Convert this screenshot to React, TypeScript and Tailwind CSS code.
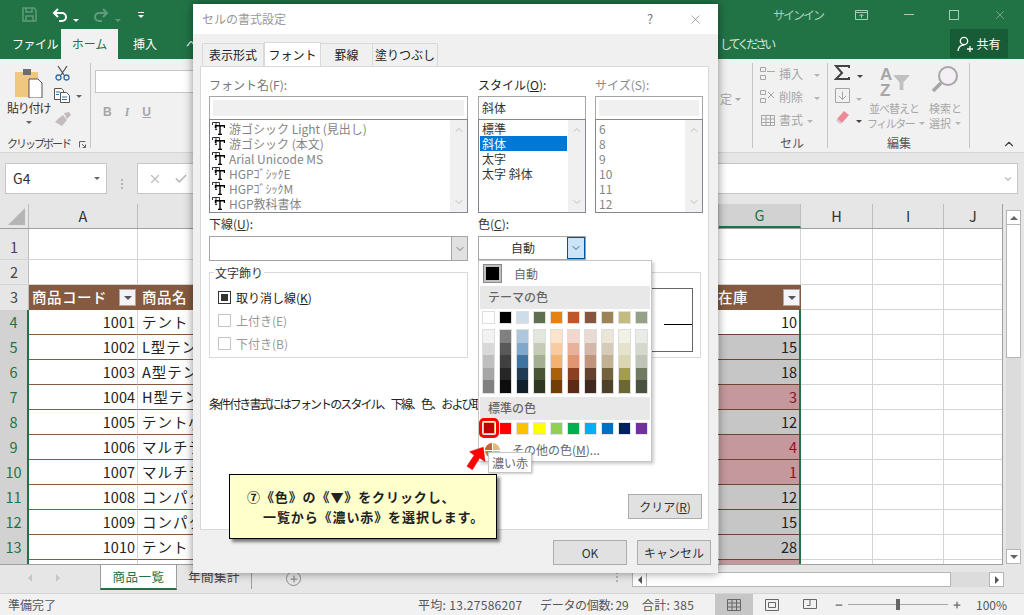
import React from "react";
import { X, Check, ChevronDown, ChevronUp, Plus, Minus } from "lucide-react";

const themeTop = ["bg-[#ffffff]", "bg-[#000000]", "bg-[#cddde9]", "bg-[#5f7050]", "bg-[#e48312]", "bg-[#bd582c]", "bg-[#865640]", "bg-[#9b8357]", "bg-[#c2bc80]", "bg-[#94a088]"];
const themeShades = [
  ["bg-[#f2f2f2]", "bg-[#d9d9d9]", "bg-[#bfbfbf]", "bg-[#a6a6a6]", "bg-[#808080]"],
  ["bg-[#808080]", "bg-[#595959]", "bg-[#404040]", "bg-[#262626]", "bg-[#0d0d0d]"],
  ["bg-[#adc8de]", "bg-[#80a8cb]", "bg-[#3e749f]", "bg-[#1f3c54]", "bg-[#111f2c]"],
  ["bg-[#e3e6dd]", "bg-[#c4ccb8]", "bg-[#a3af90]", "bg-[#4a5536]", "bg-[#2f3723]"],
  ["bg-[#fbe4cb]", "bg-[#f8cca0]", "bg-[#f3b26f]", "bg-[#aa6009]", "bg-[#713f06]"],
  ["bg-[#f4d7cc]", "bg-[#e9b09a]", "bg-[#e0966f]", "bg-[#8c401f]", "bg-[#5d2b15]"],
  ["bg-[#e9dad3]", "bg-[#d4b7a7]", "bg-[#c1957d]", "bg-[#64402f]", "bg-[#42291f]"],
  ["bg-[#ebe5d9]", "bg-[#d6cbb8]", "bg-[#c3b193]", "bg-[#74623f]", "bg-[#4d412a]"],
  ["bg-[#f2f1e5]", "bg-[#e6e3cc]", "bg-[#dad6b2]", "bg-[#a39d50]", "bg-[#6c6835]"],
  ["bg-[#e9ebe6]", "bg-[#d4d8ce]", "bg-[#bec5b7]", "bg-[#707a63]", "bg-[#4a5141]"],
];
const standard = ["bg-[#c00000]", "bg-[#ff0000]", "bg-[#ffc000]", "bg-[#ffff00]", "bg-[#92d050]", "bg-[#00b050]", "bg-[#00b0f0]", "bg-[#0070c0]", "bg-[#002060]", "bg-[#7030a0]"];

const rows = [
  { n: 4, code: 1001, name: "テント S", stock: 10, kind: "plain" },
  { n: 5, code: 1002, name: "L型テント", stock: 15, kind: "gray" },
  { n: 6, code: 1003, name: "A型テント", stock: 18, kind: "gray" },
  { n: 7, code: 1004, name: "H型テント", stock: 3, kind: "red" },
  { n: 8, code: 1005, name: "テント小", stock: 12, kind: "gray" },
  { n: 9, code: 1006, name: "マルチテント", stock: 4, kind: "red" },
  { n: 10, code: 1007, name: "マルチテント", stock: 1, kind: "red" },
  { n: 11, code: 1008, name: "コンパクト", stock: 12, kind: "gray" },
  { n: 12, code: 1009, name: "コンパクト", stock: 15, kind: "gray" },
  { n: 13, code: 1010, name: "テント・", stock: 28, kind: "gray" },
];

const Caret = ({ className = "border-t-[#666]" }: { className?: string }) => (
  <span className={`inline-block w-0 h-0 border-x-[3px] border-x-transparent border-t-[3px] ${className}`} />
);

const FilterBtn = () => (
  <div className="w-[17px] h-[17px] bg-[#f4f4f8] border border-[#a8a8a8] flex items-center justify-center">
    <span className="w-0 h-0 border-x-[4px] border-x-transparent border-t-[4px] border-t-[#555]" />
  </div>
);

const FontRow = ({ label }: { label: string }) => (
  <div className="h-[15px] flex items-center gap-[4px] text-[#858585] whitespace-nowrap">
    <svg width="13" height="13" viewBox="0 0 13 13" fill="none" stroke="#000000">
      <path d="M.5 3V.5h7V3M4 .5v7M3 7.500h2" strokeWidth="0.800" />
      <path d="M3.500 6V3.700h9V6M8 3.700v8.500M6 12.500h4" strokeWidth="1.400" />
    </svg>
    <span>{label}</span>
  </div>
);

const ListScroll = () => (
  <div className="w-[17px] h-full bg-[#f0f0f0] flex flex-col justify-between items-center py-[4px] text-[#c0c0c0]">
    <ChevronUp size={12} strokeWidth={2} />
    <ChevronDown size={12} strokeWidth={2} />
  </div>
);

const DialogButton = ({ children, className = "" }: { children: React.ReactNode; className?: string }) => (
  <div className={`w-[74px] h-[25px] bg-[#e1e1e1] border border-[#adadad] flex items-center justify-center ${className}`}>{children}</div>
);

const TitleBar = () => (
  <div className="h-[29px] flex items-center text-[#a9cdb8] relative">
    <svg className="ml-[22px]" width="15" height="15" viewBox="0 0 15 15" fill="none" stroke="#5e9c7a" strokeWidth="1.5">
      <path d="M1 1h11l2 2v11H1z" />
      <path d="M4 1v4h6V1M4 14V9h7v5" />
    </svg>
    <svg className="ml-[15px]" width="16" height="14" viewBox="0 0 16 14" fill="none" stroke="#ffffff" strokeWidth="2">
      <path d="M6 1 2 5l4 4M2 5h8a4 4 0 0 1 0 8H7" />
    </svg>
    <span className="ml-[5px] mt-[1px]"><Caret className="border-t-white" /></span>
    <svg className="ml-[14px]" width="16" height="14" viewBox="0 0 16 14" fill="none" stroke="#5e9c7a" strokeWidth="2">
      <path d="M10 1l4 4-4 4M14 5H6a4 4 0 0 0 0 8h3" />
    </svg>
    <span className="ml-[6px] mt-[1px]"><Caret className="border-t-[#5e9c7a]" /></span>
    <span className="ml-[17px] flex flex-col items-center gap-[2px]">
      <span className="w-[6px] h-[1px] bg-white" />
      <Caret className="border-t-white" />
    </span>
    <span className="ml-[629px] text-[12px] w-[49px] tracking-[-2px] whitespace-nowrap">サインイン</span>
    <svg className="ml-[33px]" width="13" height="10" viewBox="0 0 13 10" fill="none" stroke="#a9cdb8">
      <path d="M.5.5h12v9H.5zM.5 2.500h12M6.500 8V4.500M4.500 6l2-2 2 2" />
    </svg>
    <span className="ml-[36px] w-[10px] h-[1px] bg-[#a9cdb8]" />
    <span className="ml-[35px] w-[10px] h-[10px] border border-[#a9cdb8]" />
    <X className="ml-[34px]" size={14} strokeWidth={1} />
  </div>
);

const TabBar = () => (
  <div className="h-[30px] flex items-end text-[12px] text-white">
    <span className="ml-[12px] h-[30px] leading-[30px] w-[49px] tracking-[-0.5px]">ファイル</span>
    <span className="h-[30px] w-[57px] bg-[#f1f1f1] text-[#217346] text-center leading-[30px]">ホーム</span>
    <span className="ml-[15px] h-[30px] leading-[30px] w-[53px]">挿入</span>
    <span className="h-[30px] leading-[30px] w-[12px]">ペ</span>
    <span className="ml-[522px] h-[30px] leading-[30px] w-[53px] whitespace-nowrap text-[#d5e6dc] tracking-[-3px]">してください</span>
    <div className="ml-[177px] mb-[1px] w-[58px] h-[29px] bg-[#185c37] flex items-center justify-center gap-[3px]">
      <svg width="16" height="16" viewBox="0 0 16 16" fill="none" stroke="#ffffff" strokeWidth="1.300">
        <circle cx="7" cy="5" r="3.700" />
        <path d="M1 15c.5-4 2.500-6 6-6M10 13h6M13 10v6" />
      </svg>
      <span>共有</span>
    </div>
  </div>
);

const Ribbon = () => (
  <div className="h-[94px] bg-[#f1f1f1] border-b border-[#d4d4d4] flex text-[12px] text-[#444]">
    {/* クリップボード */}
    <div className="w-[91px] h-[85px] mt-[4px] border-r border-[#c6c6c6] relative shrink-0">
      <svg className="absolute left-[14px] top-[5px]" width="30" height="30" viewBox="0 0 30 30">
        <rect x="1" y="4" width="23" height="25" fill="#f0c77f" />
        <rect x="9" y="1" width="8" height="6" fill="#6d6d6d" />
        <path d="M15 11h9l4 4v15H15z" fill="#fff" stroke="#555" />
      </svg>
      <span className="absolute left-[7px] top-[36px] text-[#333] tracking-[-1.200px] whitespace-nowrap">貼り付け</span>
      <span className="absolute left-[26px] top-[56px] leading-[0]"><Caret /></span>
      <svg className="absolute left-[55px] top-[2px]" width="15" height="16" viewBox="0 0 15 16" fill="none" stroke="#2f6ea5" strokeWidth="1.300">
        <circle cx="3.500" cy="12.500" r="2.500" />
        <circle cx="11.500" cy="12.500" r="2.500" />
        <path d="M3 1l6 9M12 1L6 10" stroke="#555" />
      </svg>
      <svg className="absolute left-[54px] top-[25px]" width="16" height="15" viewBox="0 0 16 15" fill="#fff" stroke="#555">
        <path d="M.5.5h7l2 2v9H.5z" />
        <path d="M6.500 4.500h6l3 3v7h-9z" />
        <path d="M2 4h4M2 6.500h3M8 9h5M8 11.500h5" stroke="#2f6ea5" />
      </svg>
      <span className="absolute left-[76px] top-[30px] leading-[0]"><Caret /></span>
      <svg className="absolute left-[54px] top-[49px]" width="17" height="14" viewBox="0 0 17 14" fill="#c4bcbc">
        <path d="M10 1l5-1 2 3-4 4zM9 3l4 5-5 6-7-4 4-4z" />
      </svg>
      <span className="absolute left-[7px] top-[73px] text-[11px] leading-[14px] whitespace-nowrap tracking-[-2px]">クリップボード</span>
      <svg className="absolute left-[79px] top-[78px]" width="7" height="7" viewBox="0 0 7 7" fill="none" stroke="#666">
        <path d="M.5 6.500v-6h6M3 3l3.500 3.500M6.500 3.500v3h-3" />
      </svg>
    </div>
    {/* フォント */}
    <div className="w-[661px] shrink-0 pl-[4px] pt-[11px] relative">
      <div className="w-[110px] h-[23px] bg-white border border-[#c6c6c6]" />
      <div className="mt-[10px] flex items-center gap-[13px] text-[#a6a6a6] font-bold text-[12px]">
        <span className="ml-[8px] font-['Liberation_Sans',sans-serif]">B</span>
        <span className="font-['Liberation_Serif',serif] italic">I</span>
        <span className="font-['Liberation_Sans',sans-serif] underline">U</span>
      </div>
      <span className="absolute left-[629px] top-[31px] flex items-center gap-[3px] text-[#a6a6a6]">定<Caret className="border-t-[#a6a6a6]" /></span>
    </div>
    {/* セル */}
    <div className="w-[76px] h-[85px] mt-[4px] border-x border-[#c6c6c6] shrink-0 text-[#a6a6a6] flex flex-col items-start relative">
      <div className="-mt-[1px] ml-[7px] h-[23px] flex items-center gap-[3px]">
        <svg width="16" height="15" viewBox="0 0 16 15" fill="none" stroke="#a6a6a6">
          <path d="M.5 1.500h5v4h-5zM.5 9.500h5v4h-5zM7 5.500h8" />
        </svg>
        <span>挿入</span>
        <span className="ml-[8px] mt-[1px] leading-[0]"><Caret className="border-t-[#b5b5b5]" /></span>
      </div>
      <div className="ml-[7px] h-[23px] flex items-center gap-[3px]">
        <svg width="16" height="15" viewBox="0 0 16 15" fill="none" stroke="#a6a6a6">
          <path d="M.5 1.500h5v4h-5zM.5 9.500h5v4h-5zM8 3l6 6M14 3L8 9" />
        </svg>
        <span>削除</span>
        <span className="ml-[8px] mt-[1px] leading-[0]"><Caret className="border-t-[#b5b5b5]" /></span>
      </div>
      <div className="ml-[7px] h-[23px] flex items-center gap-[3px]">
        <svg width="16" height="15" viewBox="0 0 16 15" fill="none" stroke="#a6a6a6">
          <path d="M1.500 3.500h13v10h-13zM1.500 7h13M1.500 10.500h13M6 3.500v10M10.500 3.500v10" />
        </svg>
        <span>書式</span>
        <span className="ml-[1px] mt-[1px] leading-[0]"><Caret className="border-t-[#b5b5b5]" /></span>
      </div>
      <span className="absolute left-[27px] top-[73px] text-[#555] leading-[14px]">セル</span>
    </div>
    {/* 編集 */}
    <div className="w-[142px] h-[85px] mt-[4px] border-r border-[#c6c6c6] shrink-0 relative text-[#a6a6a6] text-[11px]">
      <svg className="absolute left-[6px] top-[2px]" width="16" height="16" viewBox="0 0 16 16" fill="none" stroke="#444" strokeWidth="2">
        <path d="M15 3V1H2l6 7-6 6h13v-2" />
      </svg>
      <span className="absolute left-[29px] top-[10px] leading-[0]"><Caret className="border-t-[#444]" /></span>
      <svg className="absolute left-[7px] top-[25px]" width="15" height="15" viewBox="0 0 15 15" fill="none" stroke="#a6a6a6">
        <path d="M.5.5h14v14H.5zM7.500 3.500v8M4 8l3.500 3.500L11 8" />
      </svg>
      <span className="absolute left-[28px] top-[33px] leading-[0]"><Caret className="border-t-[#b5b5b5]" /></span>
      <svg className="absolute left-[7px] top-[48px]" width="14" height="13" viewBox="0 0 14 13">
        <path d="M9 0l5 4-7 8-5-4z" fill="#ee8a98" />
        <path d="M2 8l5 4-2 1-4-3z" fill="#d0d0d0" />
      </svg>
      <span className="absolute left-[28px] top-[55px] leading-[0]"><Caret className="border-t-[#444]" /></span>
      <span className="absolute left-[52px] top-[4px] text-[17px] leading-[15px] font-bold font-['Liberation_Sans',sans-serif]">A</span>
      <span className="absolute left-[52px] top-[20px] text-[17px] leading-[15px] font-bold font-['Liberation_Sans',sans-serif]">Z</span>
      <svg className="absolute left-[65px] top-[12px]" width="17" height="15" viewBox="0 0 18 16" fill="#c0c0c0">
        <path d="M0 0h18l-7 8v8H7V8z" />
      </svg>
      <span className="absolute left-[41px] top-[38px] leading-[15px] whitespace-nowrap tracking-[-1px]">並べ替えと</span>
      <span className="absolute left-[39px] top-[53px] leading-[15px] whitespace-nowrap tracking-[-1.500px] flex items-center gap-[5px]">フィルター<Caret className="border-t-[#b5b5b5]" /></span>
      <svg className="absolute left-[103px] top-[2px]" width="28" height="28" viewBox="0 0 28 28" fill="#f4eff4" stroke="#a6a6a6" strokeWidth="2">
        <circle cx="17" cy="11" r="9" />
        <path d="M10 18 2 26" strokeWidth="3.500" />
      </svg>
      <span className="absolute left-[101px] top-[38px] leading-[15px] whitespace-nowrap">検索と</span>
      <span className="absolute left-[101px] top-[53px] leading-[15px] whitespace-nowrap flex items-center gap-[4px]">選択<Caret className="border-t-[#b5b5b5]" /></span>
      <span className="absolute left-[59px] top-[73px] text-[#555] text-[12px] leading-[14px]">編集</span>
    </div>
    <div className="flex-1 flex items-end justify-end pb-[1px] pr-[8px] text-[#444]">
      <ChevronUp size={14} strokeWidth={2} />
    </div>
  </div>
);

const FormulaBar = () => (
  <div className="h-[51px] bg-[#e6e6e6] pt-[10px] pl-[5px] flex text-[14px]">
    <div className="w-[102px] h-[31px] bg-white border border-[#c6c6c6] flex items-center justify-between pl-[7px] pr-[6px] text-[#333]">
      <span>G4</span>
      <span className="w-0 h-0 border-x-[3px] border-x-transparent border-t-[3px] border-t-[#666]" />
    </div>
    <div className="w-[30px] flex flex-col items-center justify-center gap-[2px]">
      <span className="w-[2px] h-[2px] bg-[#b5b5b5]" />
      <span className="w-[2px] h-[2px] bg-[#b5b5b5]" />
      <span className="w-[2px] h-[2px] bg-[#b5b5b5]" />
    </div>
    <div className="w-[881px] h-[31px] bg-white border border-[#c6c6c6] flex items-center justify-between pl-[10px] pr-[4px] text-[#bdbdbd]">
      <span className="flex items-center gap-[12px]">
        <X size={14} strokeWidth={2} />
        <Check size={14} strokeWidth={3} />
      </span>
      <ChevronDown size={10} strokeWidth={3} />
    </div>
  </div>
);

const ColHead = ({ label, className = "" }: { label: string; className?: string }) => (
  <div className={`h-[24px] border-r border-[#bdbdbd] flex items-center justify-center ${className}`}>{label}</div>
);

const Sheet = () => (
  <div className="h-[361px] bg-[#e6e6e6] flex text-[14.5px] text-[#222]">
    <div className="w-[1003px] flex flex-col border-r border-[#9e9e9e] bg-white">
      <div className="flex h-[25px] bg-[#e6e6e6] border-b border-[#9e9e9e] text-[#333] shrink-0">
        <div className="w-[29px] h-[24px] border-r border-[#bdbdbd] flex items-end justify-end p-[3px]">
          <span className="w-0 h-0 border-l-[17px] border-l-transparent border-b-[17px] border-b-[#b5b5b5]" />
        </div>
        <ColHead label="A" className="w-[109px]" />
        <ColHead label="B" className="w-[581px]" />
        <ColHead label="G" className="w-[82px] bg-[#d2d2d2] text-[#217346] border-b-2 border-b-[#217346]" />
        <ColHead label="H" className="w-[72px]" />
        <ColHead label="I" className="w-[71px]" />
        <ColHead label="J" className="w-[58px] border-r-0" />
      </div>
      {[1, 2].map((n) => (
        <div key={n} className={`flex border-b border-[#d4d4d4] shrink-0 ${n === 1 ? "h-[31px]" : "h-[25px]"}`}>
          <div className="w-[29px] bg-[#e6e6e6] border-r border-[#bdbdbd] flex items-end justify-center pb-[1px] text-[#444]">{n}</div>
          <div className="w-[109px] border-r border-[#d4d4d4]" />
          <div className="w-[663px] border-r border-[#d4d4d4]" />
          <div className="w-[72px] border-r border-[#d4d4d4]" />
          <div className="w-[71px] border-r border-[#d4d4d4]" />
        </div>
      ))}
      <div className="flex h-[25px] shrink-0">
        <div className="w-[29px] bg-[#e6e6e6] border-r border-[#bdbdbd] flex items-center justify-center pb-[2px] text-[#444]">3</div>
        <div className="w-[772px] bg-[#855a41] text-white font-medium flex items-center">
          <div className="w-[109px] pl-[3px] pr-[1px] flex items-center justify-between border-r border-[#855a41] tracking-[0.5px]">
            <span className="-mt-[2px]">商品コード</span>
            <FilterBtn />
          </div>
          <span className="ml-[4px] tracking-[0.5px] -mt-[2px]">商品名</span>
          <span className="ml-auto tracking-[0.5px] -mt-[2px]">在庫</span>
          <div className="ml-[35px] mr-[1px]"><FilterBtn /></div>
        </div>
        <div className="w-[72px] border-r border-b border-[#d4d4d4]" />
        <div className="w-[71px] border-r border-b border-[#d4d4d4]" />
        <div className="flex-1 border-b border-[#d4d4d4]" />
      </div>
      {rows.map((r) => (
        <div key={r.n} className="flex h-[25px] shrink-0">
          <div className="w-[29px] bg-[#d2d2d2] border-r-2 border-[#217346] flex items-center justify-center pb-[2px] text-[#217346]">{r.n}</div>
          <div className="w-[109px] border-r border-r-[#d4d4d4] border-b border-b-[#855a41] flex items-center justify-end pr-[2px] pb-[1px]">{r.code}</div>
          <div className="w-[581px] border-b border-[#855a41] flex items-center pl-[4px] pb-[1px] tracking-[1px] whitespace-nowrap">{r.name}</div>
          <div className={`w-[82px] border-b border-b-[#6b4630] border-r-2 border-r-[#217346] flex items-center justify-end pr-[2px] pb-[1px] ${r.kind === "gray" ? "bg-[#c6c6c6]" : r.kind === "red" ? "bg-[#c4989c] text-[#8e1020]" : ""}`}>{r.stock}</div>
          <div className="w-[72px] border-r border-b border-[#d4d4d4]" />
          <div className="w-[71px] border-r border-b border-[#d4d4d4]" />
          <div className="flex-1 border-b border-[#d4d4d4]" />
        </div>
      ))}
      <div className="flex h-[5px] overflow-hidden border-b border-[#9e9e9e]">
        <div className="w-[29px] bg-[#d2d2d2] border-r-2 border-[#217346]" />
        <div className="w-[109px] border-r border-[#d4d4d4]" />
        <div className="w-[581px]" />
        <div className="w-[82px] bg-[#c4989c] border-r-2 border-[#217346]" />
        <div className="w-[72px] border-r border-[#d4d4d4]" />
        <div className="w-[71px] border-r border-[#d4d4d4]" />
      </div>
    </div>
    <div className="ml-[3px] w-[15px] flex flex-col">
      <div className="mt-[6px] h-[15px] bg-white border border-[#b5b5b5] flex items-center justify-center">
        <span className="w-0 h-0 border-x-[4px] border-x-transparent border-b-[4px] border-b-[#666]" />
      </div>
      <div className="h-[133px] bg-white border border-[#b5b5b5] border-t-0" />
      <div className="flex-1 bg-[#dcdcdc]" />
      <div className="h-[15px] mb-[1px] bg-white border border-[#b5b5b5] flex items-center justify-center">
        <span className="w-0 h-0 border-x-[4px] border-x-transparent border-t-[4px] border-t-[#666]" />
      </div>
    </div>
  </div>
);

const SheetTabs = () => (
  <div className="h-[29px] bg-[#e6e6e6] flex items-start text-[12.5px] border-b border-[#d4d4d4]">
    <div className="w-[100px] h-[25px] flex items-center pl-[28px] gap-[24px]">
      <span className="w-0 h-0 border-y-[4px] border-y-transparent border-r-[4px] border-r-[#c6c6c6]" />
      <span className="w-0 h-0 border-y-[4px] border-y-transparent border-l-[4px] border-l-[#c6c6c6]" />
    </div>
    <div className="w-[77px] h-[25px] bg-white border-x border-[#9e9e9e] border-b-2 border-b-[#217346] text-[#217346] text-center leading-[24px] tracking-[0.5px]">商品一覧</div>
    <div className="w-[75px] h-[24px] border-r border-[#9e9e9e] pl-[11px] leading-[24px] tracking-[0.5px] text-[#444] whitespace-nowrap">年間集計</div>
    <div className="ml-[34px] mt-[6px] w-[15px] h-[15px] rounded-full border border-[#8a8a8a] flex items-center justify-center text-[#8a8a8a]">
      <Plus size={10} strokeWidth={3} />
    </div>
    <div className="ml-[315px] mt-[3px] w-[2px] h-[18px] flex flex-col justify-center gap-[2px]">
      <span className="w-[2px] h-[2px] bg-[#b5b5b5]" />
      <span className="w-[2px] h-[2px] bg-[#b5b5b5]" />
      <span className="w-[2px] h-[2px] bg-[#b5b5b5]" />
    </div>
    <div className="ml-[14px] mt-[7px] w-[372px] h-[15px] flex bg-[#dcdcdc]">
      <div className="w-[15px] bg-white border border-[#b5b5b5] flex items-center justify-center">
        <span className="w-0 h-0 border-y-[4px] border-y-transparent border-r-[4px] border-r-[#555]" />
      </div>
      <div className="w-[304px] bg-white border border-[#b5b5b5] border-l-0" />
      <div className="ml-[38px] w-[15px] bg-white border border-[#b5b5b5] flex items-center justify-center">
        <span className="w-0 h-0 border-y-[4px] border-y-transparent border-l-[4px] border-l-[#555]" />
      </div>
    </div>
  </div>
);

const StatusBar = () => (
  <div className="h-[21px] bg-[#f1f1f1] flex items-center text-[12px] leading-[16px] text-[#555] whitespace-nowrap">
    <span className="ml-[8px] w-[410px]">準備完了</span>
    <span className="w-[122px] tracking-[0.3px]">平均: 13.27586207</span>
    <span className="w-[102px] tracking-[-0.3px]">データの個数: 29</span>
    <span className="w-[73px] tracking-[0.3px]">合計: 385</span>
    <div className="w-[38px] h-[21px] bg-[#c6c6c6] flex items-center justify-center">
      <svg width="14" height="12" viewBox="0 0 14 12" fill="none" stroke="#666">
        <path d="M.5.5h13v11H.5zM.5 4h13M.5 8h13M5 .5v11M9.500.5v11" />
      </svg>
    </div>
    <div className="w-[38px] flex justify-center">
      <svg width="14" height="12" viewBox="0 0 14 12" fill="none" stroke="#666">
        <path d="M.5.5h13v11H.5zM3.500 3.500h7v5h-7z" />
      </svg>
    </div>
    <div className="w-[38px] flex justify-center">
      <svg width="14" height="12" viewBox="0 0 14 12" fill="none" stroke="#666">
        <path d="M.5.5h13v9H.5zM7 .5v6H4" />
      </svg>
    </div>
    <Minus className="ml-[5px] text-[#666]" size={10} strokeWidth={3} />
    <div className="ml-[4px] w-[100px] h-[1px] bg-[#a6a6a6] relative">
      <span className="absolute left-[48px] -top-[5px] w-[4px] h-[11px] bg-[#666]" />
    </div>
    <Plus className="ml-[4px] text-[#666]" size={10} strokeWidth={3} />
    <span className="ml-[14px]">100%</span>
  </div>
);

const ColorDropdown = () => (
  <div className="absolute left-[285px] top-[256px] w-[174px] h-[202px] bg-white border border-[#c6c6c6] shadow-[2px_2px_3px_rgba(0,0,0,0.2)] px-[1px] text-[12px] text-[#666]">
    <div className="h-[25px] flex items-center pl-[3px] gap-[12px]">
      <span className="w-[19px] h-[19px] bg-black border-[3px] border-[#c0c0c0] outline outline-[#8a8a8a] -outline-offset-1" />
      <span>自動</span>
    </div>
    <div className="h-[23px] bg-[#e8e8e8] pl-[8px] leading-[22px] font-medium text-[#666]">テーマの色</div>
    <div className="mt-[2px] pl-[2px] flex gap-[4px]">
      {themeTop.map((c) => (
        <span key={c} className={`w-[13px] h-[13px] border border-[#dedede] ${c}`} />
      ))}
    </div>
    <div className="mt-[5px] pl-[2px] flex gap-[4px]">
      {themeShades.map((col, i) => (
        <div key={i} className="w-[13px] h-[65px] border border-[#dedede] flex flex-col">
          {col.map((c) => (
            <span key={c} className={`flex-1 ${c}`} />
          ))}
        </div>
      ))}
    </div>
    <div className="mt-[3px] h-[23px] bg-[#e8e8e8] pl-[8px] leading-[22px] font-medium text-[#666]">標準の色</div>
    <div className="mt-[2px] pl-[2px] flex gap-[4px]">
      {standard.map((c) => (
        <span key={c} className={`w-[13px] h-[13px] border border-[#e4e4e4] ${c}`} />
      ))}
    </div>
    <div className="mt-[5px] h-[20px] flex items-center pl-[5px] gap-[12px]">
      <svg width="15" height="15" viewBox="0 0 15 15">
        <circle cx="7.500" cy="7.500" r="7.500" fill="#e8b878" />
        <path d="M7.500 7.500V0A7.500 7.500 0 0 0 0 7.500z" fill="#c9623a" />
        <path d="M7.500 7.500H0A7.500 7.500 0 0 0 7.500 15z" fill="#d8703e" />
        <path d="M7 0h1v15H7zM0 7h15v1H0z" fill="#fff" />
      </svg>
      <span className="whitespace-nowrap">その他の色(<span className="underline">M</span>)...</span>
    </div>
    {/* 選択中の赤枠 */}
    <span className="absolute left-0 top-[157px] w-[20px] h-[20px] rounded-[5px] border-[3px] border-[#ff0000] flex items-center justify-center">
      <span className="w-[12px] h-[12px] bg-[#c00000] border border-[#f6c27a]" />
    </span>
    <span className="absolute left-[9px] top-[191px] w-[44px] h-[21px] bg-white border border-[#c6c6c6] shadow-[1px_1px_2px_rgba(0,0,0,0.2)] text-center leading-[19px] text-[#666] whitespace-nowrap">濃い赤</span>
  </div>
);

const Dialog = () => (
  <div className="absolute left-[193px] top-[4px] w-[525px] h-[569px] bg-[#f0f0f0] shadow-[0_0_9px_rgba(0,0,0,0.45)] text-[12px] leading-[14px] text-[#333]">
    <div className="h-[30px] bg-white flex items-center pl-[9px] text-[#999]">
      <span className="w-[84px] whitespace-nowrap">セルの書式設定</span>
      <span className="ml-[361px] w-[8px] text-[#777] text-[13px]">?</span>
      <X className="ml-[33px] text-[#777]" size={15} strokeWidth={1} />
    </div>
    <div className="ml-[9px] mt-[8px] h-[24px] flex items-end">
      <div className="w-[62px] h-[23px] bg-[#f0f0f0] border border-b-0 border-[#d9d9d9] text-center leading-[22px] text-[#222]">表示形式</div>
      <div className="w-[57px] h-[25px] bg-white border border-b-0 border-[#d9d9d9] text-center leading-[24px] -mb-[1px] relative text-[#222]">フォント</div>
      <div className="w-[52px] h-[23px] bg-[#f0f0f0] border-y border-r border-b-0 border-[#d9d9d9] text-center leading-[22px] text-[#222]">罫線</div>
      <div className="w-[65px] h-[23px] bg-[#f0f0f0] border-y border-r border-b-0 border-[#d9d9d9] text-center leading-[22px] text-[#222]">塗りつぶし</div>
    </div>
    <div className="ml-[7px] w-[509px] h-[464px] bg-white border border-[#d9d9d9] pl-[8px] pr-[5px] pt-[11px] relative">
      <div className="flex gap-[10px]">
        <div className="w-[259px]">
          <div className="h-[14px] text-[#777]">フォント名(F):</div>
          <div className="mt-[4px] h-[24px] border border-[#a6a6a6] p-[3px] bg-white">
            <div className="h-full bg-[#f0f0f0]" />
          </div>
          <div className="h-[94px] border border-[#828790] -mt-[1px] pl-[2px] flex justify-between">
            <div className="pt-[1px]">
              <FontRow label="游ゴシック Light (見出し)" />
              <FontRow label="游ゴシック (本文)" />
              <FontRow label="Arial Unicode MS" />
              <FontRow label="HGPｺﾞｼｯｸE" />
              <FontRow label="HGPｺﾞｼｯｸM" />
              <FontRow label="HGP教科書体" />
            </div>
            <ListScroll />
          </div>
        </div>
        <div className="w-[108px]">
          <div className="h-[14px] text-[#222]">スタイル(<span className="underline">O</span>):</div>
          <div className="mt-[4px] h-[24px] border border-[#a6a6a6] bg-white pl-[3px] leading-[22px]">斜体</div>
          <div className="h-[94px] border border-[#828790] -mt-[1px] pl-[1px] flex justify-between">
            <div className="w-[87px] pt-[1px]">
              <div className="h-[15px] pl-[2px] leading-[15px]">標準</div>
              <div className="h-[15px] pl-[2px] leading-[15px] bg-[#0078d7] text-white">斜体</div>
              <div className="h-[15px] pl-[2px] leading-[15px]">太字</div>
              <div className="h-[15px] pl-[2px] leading-[15px]">太字 斜体</div>
            </div>
            <ListScroll />
          </div>
        </div>
        <div className="ml-[-1px] w-[108px]">
          <div className="h-[14px] text-[#888]">サイズ(S):</div>
          <div className="mt-[4px] h-[24px] border border-[#a6a6a6] p-[3px] bg-white">
            <div className="h-full bg-[#f0f0f0]" />
          </div>
          <div className="h-[94px] border border-[#828790] -mt-[1px] pl-[3px] flex justify-between text-[#858585]">
            <div className="pt-[1px]">
              {[6, 8, 9, 10, 11, 12].map((s) => (
                <div key={s} className="h-[15px] leading-[15px]">{s}</div>
              ))}
            </div>
            <ListScroll />
          </div>
        </div>
      </div>
      <div className="mt-[4px] flex gap-[10px]">
        <div className="w-[259px]">
          <div className="h-[14px]">下線(<span className="underline">U</span>):</div>
          <div className="mt-[5px] h-[25px] border border-[#a6a6a6] flex justify-end">
            <div className="w-[16px] bg-[#e1e1e1] border-l border-[#a6a6a6] flex items-center justify-center text-[#555]">
              <ChevronDown size={12} strokeWidth={1.500} />
            </div>
          </div>
          <div className="mt-[11px] h-[86px] border border-[#d9d9d9] relative pt-[13px] pl-[8px]">
            <span className="absolute left-[4px] -top-[7px] bg-white px-[1px]">文字飾り</span>
            <div className="h-[23px] flex items-center gap-[5px] text-[#222]">
              <span className="w-[13px] h-[13px] border border-[#333] flex items-center justify-center">
                <span className="w-[7px] h-[7px] bg-[#333]" />
              </span>
              <span>取り消し線(<span className="underline">K</span>)</span>
            </div>
            <div className="h-[23px] flex items-center gap-[5px] text-[#999]">
              <span className="w-[13px] h-[13px] border border-[#c6c6c6]" />
              <span>上付き(E)</span>
            </div>
            <div className="h-[23px] flex items-center gap-[5px] text-[#999]">
              <span className="w-[13px] h-[13px] border border-[#c6c6c6]" />
              <span>下付き(B)</span>
            </div>
          </div>
        </div>
        <div className="w-[223px]">
          <div className="h-[14px]">色(<span className="underline">C</span>):</div>
          <div className="mt-[5px] w-[108px] h-[24px] border border-[#a6a6a6] flex justify-between">
            <span className="flex-1 text-center leading-[22px]">自動</span>
            <div className="w-[18px] bg-[#cce4f7] border border-[#005499] flex items-center justify-center text-[#333]">
              <ChevronDown size={12} strokeWidth={1.500} />
            </div>
          </div>
          <div className="mt-[12px] h-[86px] border border-[#d9d9d9] flex justify-end items-end pb-[5px] pr-[7px]">
            <div className="w-[180px] h-[64px] border border-[#666] border-l-0 flex items-center">
              <span className="ml-[151px] w-[29px] h-[1px] bg-black mt-[9px]" />
            </div>
          </div>
        </div>
      </div>
      <div className="mt-[39px] h-[14px] whitespace-nowrap tracking-[-1.900px] text-[#222]">条件付き書式にはフォントのスタイル、下線、色、および取り消し線を設定できます。</div>
      <div className="mt-[83px] flex justify-end pr-[1px]">
        <DialogButton>クリア(<span className="underline">R</span>)</DialogButton>
      </div>
    </div>
    <div className="mt-[10px] pr-[7px] flex justify-end gap-[10px]">
      <DialogButton>OK</DialogButton>
      <DialogButton>キャンセル</DialogButton>
    </div>
    <ColorDropdown />
  </div>
);

const App = () => (
  <div className="relative w-[1024px] h-[615px] overflow-hidden bg-[#e6e6e6] font-['Noto_Sans_CJK_JP','Noto_Sans',sans-serif]">
    <div className="bg-[#217346]">
      <TitleBar />
      <TabBar />
    </div>
    <Ribbon />
    <FormulaBar />
    <Sheet />
    <SheetTabs />
    <StatusBar />
    <Dialog />
    <svg className="absolute left-[466px] top-[447px]" width="20" height="23" viewBox="0 0 22 25">
      <path d="M19 0 21 16 15 12 7 25 1 21 9 9 4 5z" fill="#ff0000" stroke="#c00000" strokeWidth="0.500" />
    </svg>
    <div className="absolute left-[229px] top-[474px] w-[268px] h-[65px] bg-[#ffffcc] border border-black shadow-[3px_3px_3px_rgba(0,0,0,0.5)] text-[13px] font-bold leading-[20px] text-[#222] pt-[12px] whitespace-nowrap tracking-[0.9px]">
      <div className="ml-[17px]">⑦《色》の《▼》をクリックし、</div>
      <div className="ml-[33px]">一覧から《濃い赤》を選択します。</div>
    </div>
  </div>
);

export default App;
